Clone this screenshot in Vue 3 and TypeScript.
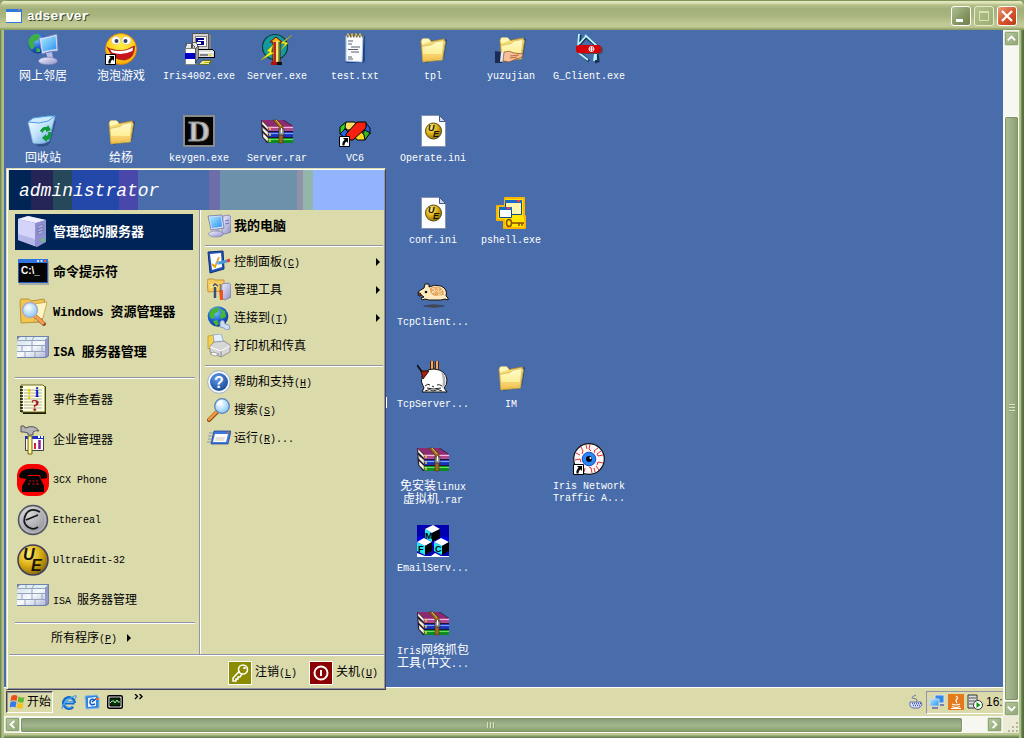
<script setup lang="ts">
import { h, type FunctionalComponent } from 'vue'

interface DesktopItem {
  icon: string
  label: string
  col: number
  row: number
  shortcut?: boolean
}

interface MenuItem {
  icon: string
  label: string
  active?: boolean
  arrow?: boolean
}

// Han runs are set larger than Latin ones, and "&X" marks an underlined access key.
const Txt: FunctionalComponent<{ s: string }> = (props) =>
  h(
    'span',
    { class: 'txt' },
    props.s
      .split(/(&\w|[\u4e00-\u9fff]+)/)
      .filter((part) => part !== '')
      .map((part) => {
        if (part.startsWith('&')) return h('u', part.slice(1))
        if (/[\u4e00-\u9fff]/.test(part)) return h('span', { class: 'han' }, part)
        return part
      }),
  )
Txt.props = ['s']

const desktop: DesktopItem[] = [
  { icon: 'network', label: '网上邻居', col: 1, row: 1 },
  { icon: 'smiley', label: '泡泡游戏', col: 2, row: 1, shortcut: true },
  { icon: 'setup', label: 'Iris4002.exe', col: 3, row: 1 },
  { icon: 'bolts', label: 'Server.exe', col: 4, row: 1 },
  { icon: 'notepad', label: 'test.txt', col: 5, row: 1 },
  { icon: 'folder', label: 'tpl', col: 6, row: 1 },
  { icon: 'shared', label: 'yuzujian', col: 7, row: 1 },
  { icon: 'knife', label: 'G_Client.exe', col: 8, row: 1 },
  { icon: 'recycle', label: '回收站', col: 1, row: 2 },
  { icon: 'folder', label: '给杨', col: 2, row: 2 },
  { icon: 'letterd', label: 'keygen.exe', col: 3, row: 2 },
  { icon: 'rar', label: 'Server.rar', col: 4, row: 2 },
  { icon: 'vc', label: 'VC6', col: 5, row: 2, shortcut: true },
  { icon: 'uedoc', label: 'Operate.ini', col: 6, row: 2 },
  { icon: 'uedoc', label: 'conf.ini', col: 6, row: 3 },
  { icon: 'pshell', label: 'pshell.exe', col: 7, row: 3 },
  { icon: 'hamster', label: 'TcpClient...', col: 6, row: 4 },
  { icon: 'rabbit', label: 'TcpServer...', col: 6, row: 5 },
  { icon: 'folder', label: 'IM', col: 7, row: 5 },
  { icon: 'rar', label: '免安装linux\n虚拟机.rar', col: 6, row: 6 },
  { icon: 'eye', label: 'Iris Network\nTraffic A...', col: 8, row: 6, shortcut: true },
  { icon: 'mfc', label: 'EmailServ...', col: 6, row: 7 },
  { icon: 'rar', label: 'Iris网络抓包\n工具(中文...', col: 6, row: 8 },
]

const pinned: MenuItem[] = [
  { icon: 'tower', label: '管理您的服务器', active: true },
  { icon: 'cmd', label: '命令提示符' },
  { icon: 'explorer', label: 'Windows 资源管理器' },
  { icon: 'wall', label: 'ISA 服务器管理' },
]

const recent: MenuItem[] = [
  { icon: 'events', label: '事件查看器' },
  { icon: 'hammer', label: '企业管理器' },
  { icon: 'phone', label: '3CX Phone' },
  { icon: 'ethereal', label: 'Ethereal' },
  { icon: 'ue', label: 'UltraEdit-32' },
  { icon: 'wall', label: 'ISA 服务器管理' },
]

const places: MenuItem[][] = [
  [{ icon: 'computer', label: '我的电脑', active: true }],
  [
    { icon: 'control', label: '控制面板(&C)', arrow: true },
    { icon: 'tools', label: '管理工具', arrow: true },
    { icon: 'connect', label: '连接到(&T)', arrow: true },
    { icon: 'printer', label: '打印机和传真' },
  ],
  [
    { icon: 'help', label: '帮助和支持(&H)' },
    { icon: 'search', label: '搜索(&S)' },
    { icon: 'run', label: '运行(&R)...' },
  ],
]

const quick = ['ie', 'outlook', 'monitor']
const tray = ['lan', 'java', 'service']
</script>

<template>
  <div class="window">
    <svg class="defs" width="0" height="0" aria-hidden="true">
      <defs>
        <linearGradient id="g-folder" x1="0" y1="0" x2="0" y2="1">
          <stop offset="0" stop-color="#fffbc8" /><stop offset=".6" stop-color="#fdf09a" /><stop offset="1" stop-color="#f2c040" />
        </linearGradient>
        <linearGradient id="g-screen" x1="0" y1="0" x2="1" y2="1">
          <stop offset="0" stop-color="#a8ecff" /><stop offset="1" stop-color="#2d8ff0" />
        </linearGradient>
        <linearGradient id="g-case" x1="0" y1="0" x2="1" y2="1">
          <stop offset="0" stop-color="#f4f4ff" /><stop offset="1" stop-color="#8d8fc8" />
        </linearGradient>
        <radialGradient id="g-globe" cx=".4" cy=".3" r=".8">
          <stop offset="0" stop-color="#79c4ff" /><stop offset=".5" stop-color="#1f63d6" /><stop offset="1" stop-color="#0b2b80" />
        </radialGradient>
        <radialGradient id="g-smile" cx=".5" cy=".35" r=".7">
          <stop offset="0" stop-color="#fff04a" /><stop offset=".7" stop-color="#ffc915" /><stop offset="1" stop-color="#f29a08" />
        </radialGradient>
        <radialGradient id="g-gold" cx=".35" cy=".3" r=".8">
          <stop offset="0" stop-color="#fff07a" /><stop offset=".5" stop-color="#d9ad12" /><stop offset="1" stop-color="#7a5e08" />
        </radialGradient>
        <radialGradient id="g-silver" cx=".35" cy=".3" r=".8">
          <stop offset="0" stop-color="#d8d8d8" /><stop offset="1" stop-color="#8f8f98" />
        </radialGradient>
        <radialGradient id="g-lens" cx=".4" cy=".35" r=".7">
          <stop offset="0" stop-color="#ffffff" /><stop offset="1" stop-color="#7fc6f2" />
        </radialGradient>
        <radialGradient id="g-help" cx=".4" cy=".3" r=".8">
          <stop offset="0" stop-color="#5f9ce8" /><stop offset="1" stop-color="#14418f" />
        </radialGradient>
        <linearGradient id="g-wall" x1="0" y1="0" x2="1" y2="1">
          <stop offset="0" stop-color="#d4e0ee" /><stop offset=".5" stop-color="#f6fbff" /><stop offset="1" stop-color="#b4bcd8" />
        </linearGradient>
        <linearGradient id="g-bin" x1="0" y1="0" x2="1" y2="1">
          <stop offset="0" stop-color="#ffffff" /><stop offset=".5" stop-color="#bfe2fa" /><stop offset="1" stop-color="#5b9ade" />
        </linearGradient>

        <symbol id="i-shortcut" viewBox="0 0 32 32">
          <path d="M.5 21.5h10v10H.5z" fill="#fff" stroke="#000" />
          <path d="M4 23h5v5L7.500 26.500C6 27.500 5.500 28.500 5.500 30.500H3.500C3 28 4 26 5.700 24.700z" fill="#000" />
        </symbol>

        <symbol id="i-network" viewBox="0 0 32 32">
          <circle cx="11" cy="10.500" r="10" fill="url(#g-globe)" />
          <path d="M2 6C5 1 10 0 13 2L11 7 6 9 8 13 5 17C1 13 1 9 2 6zM10 15l3 1v3l-4 0z" fill="#3cb043" />
          <path d="M12 5Q20 4 30 1L31 18Q22 18 15 21z" fill="#d4dcf4" stroke="#6a78b8" stroke-width=".7" />
          <path d="M14 6.500Q21 5.500 28.500 3L29.500 16Q22 16.500 16 18.500z" fill="url(#g-screen)" />
          <path d="M19 20l6-1 1 6-5 1z" fill="#b8bbe2" />
          <ellipse cx="21" cy="28" rx="9.500" ry="3.800" fill="url(#g-case)" stroke="#777aae" stroke-width=".6" />
        </symbol>

        <symbol id="i-smiley" viewBox="0 0 32 32">
          <circle cx="16" cy="16" r="15.500" fill="url(#g-smile)" stroke="#e48200" stroke-width=".8" />
          <ellipse cx="11" cy="7.500" rx="4.500" ry="4" fill="#fff" stroke="#c9b98a" stroke-width=".5" />
          <ellipse cx="21.500" cy="7.500" rx="4.500" ry="4" fill="#fff" stroke="#c9b98a" stroke-width=".5" />
          <circle cx="11.500" cy="8" r="2" fill="#31415a" /><circle cx="20.500" cy="8" r="2" fill="#31415a" />
          <path d="M2 14Q4 16 6 16 18 20 27 14L29.500 13Q30 25 20 27 8 28 2 14z" fill="#c8161d" stroke="#8e1010" stroke-width=".6" />
          <path d="M5 16.500Q17 20.500 28 14.500L27.500 18Q17 23 7 19.500z" fill="#fff" />
        </symbol>

        <symbol id="i-setup" viewBox="0 0 32 32" shape-rendering="crispEdges">
          <path d="M9.500.5h16v16h-16z" fill="#d6d3ce" stroke="#555" /><path d="M26 1l2 2v14h-2z" fill="#848284" />
          <path d="M12 3h11v10H12z" fill="#fff" stroke="#848284" /><path d="M13 5h8v7h-8z" fill="#000084" />
          <path d="M15 7h6v1h-6zM13 9h5v2h-5z" fill="#fff" />
          <path d="M14.500 16.500h15l2 2v6h-17z" fill="#dedede" stroke="#000" /><path d="M15 19h16" stroke="#fff" /><path d="M17 22h8" stroke="#848284" stroke-width="2" /><path d="M26 22h2" stroke="#e8e000" stroke-width="2" />
          <path d="M2 15h10v16H2z" fill="#fff" stroke="#848284" /><path d="M2 20h10v6H2z" fill="#0000c8" />
          <path d="M12 16l3-3v13l-3 4z" fill="#9a9a9a" stroke="#333" stroke-width=".7" /><path d="M2 15l2-5 5 0-1 5M12 15l-3-5 4-1 2 4" fill="#e8e8e8" stroke="#333" stroke-width=".7" />
          <path d="M20 27h9l-3 4H16z" fill="#e8e8a0" stroke="#6a6a20" /><path d="M21 29h5" stroke="#c8b800" />
        </symbol>

        <symbol id="i-bolts" viewBox="0 0 32 32">
          <circle cx="14" cy="14" r="12.500" fill="#149a9e" stroke="#073c3c" stroke-width="1.200" />
          <path d="M9 9l6-5 6 5h-2v20h-7V9z" fill="#e8b818" stroke="#700" />
          <path d="M14 9v20" stroke="#c02020" stroke-width="2" /><path d="M16 8v21" stroke="#fff4a0" stroke-width="1.500" /><path d="M18 9v20" stroke="#284" />
          <path d="M10 29h11v3H10z" fill="#b01010" /><path d="M16 29h5v3h-5z" fill="#111" />
          <path d="M31 2L20 10l4 1-4 6 7-7-4-1zM0 27l9-8-3-1 6-6-2 7 3 1z" fill="#ffff20" stroke="#a8a000" stroke-width=".6" />
        </symbol>

        <symbol id="i-notepad" viewBox="0 0 32 32">
          <path d="M8 3h18v25l-2 2H7z" fill="#193a7a" opacity=".8" />
          <path d="M7 3h17l-1 26-16-1z" fill="#fdfdff" stroke="#a8c4e8" />
          <path d="M8 3h16" stroke="#7a6b20" stroke-width="3" stroke-dasharray="1.500 1.500" />
          <path d="M8 1.500h15" stroke="#e8b840" stroke-width="2" stroke-dasharray="2 2" />
          <path d="M9 8h5M9 11h4M12 14h9M9 16.500h10M12 19h8M9 24h4M9 26h5" stroke="#54606e" stroke-width="1.200" />
        </symbol>

        <symbol id="i-folder" viewBox="0 0 32 32">
          <path d="M6 9l2 21 19-5 3-18-2-1z" fill="#16366e" opacity=".65" />
          <path d="M4 8.500L5 6h7l2 2.500 13-2.500 1.500 3-3 18L6 29z" fill="#f4dc74" stroke="#b8912c" stroke-width=".8" />
          <path d="M4.500 8Q5 5.500 6 5.500h5.500L14 8.500l-9 3z" fill="#fff7b8" />
          <path d="M5 13.500l10-2 3-2.500 9-1.500-2 17.500L6 28.500z" fill="url(#g-folder)" stroke="#d3aa45" stroke-width=".6" />
          <path d="M5.500 21h20L25 24.500 6 28z" fill="#f5bd58" opacity=".5" />
        </symbol>

        <symbol id="i-shared" viewBox="0 0 32 32">
          <use href="#i-folder" x="1" y="-1" width="32" height="32" />
          <path d="M0 18l7 1v11H0z" fill="#1c2b52" /><path d="M6 19l4 1-1 8-4 1z" fill="#e6ecf8" />
          <path d="M9 19q6-2 10 1l9 1q0 4-7 5l-7 3-6-1z" fill="#f2c09a" stroke="#8a4d28" stroke-width=".7" />
          <path d="M15 23l9-1M15 25l7-1" stroke="#c86a38" />
        </symbol>

        <symbol id="i-knife" viewBox="0 0 32 32">
          <path d="M6 14L7 2M7 11l7-8M13 4l12 10M7 20l9 8M24 19l1 9-3 1" fill="none" stroke="#193355" stroke-width="3" />
          <path d="M5 13L6 1M6 11l7-8M12 2l12 11M6 20l9 7M22 20l-1 8M23 18v9" fill="none" stroke="#b8f6ff" stroke-width="1.800" />
          <rect x="5" y="13" width="25" height="8" rx="4" fill="#4a4a52" /><rect x="3" y="12" width="25" height="8" rx="3" fill="#d80008" />
          <circle cx="18.500" cy="16" r="2.500" fill="none" stroke="#fff" /><path d="M18.500 13.500v5M16 16h5" stroke="#fff" />
        </symbol>

        <symbol id="i-recycle" viewBox="0 0 32 32">
          <path d="M6 8l4 23q9 2 13-3l6-22z" fill="#17396f" opacity=".5" />
          <path d="M1 7Q12 7 20 3l8-2-6 25q-6 4-16 2z" fill="url(#g-bin)" stroke="#83b5e4" stroke-width=".7" />
          <path d="M1 7l5-4 15-2 7 0-7 5-9 2z" fill="#cbeafd" stroke="#4d9ae0" />
          <path d="M13 16q3-5 7-4l1-2 3 5-5 2 0-2q-3 0-3 3zM24 17q1 7-4 8v2l-5-4 4-4v2q3-1 2-4z" fill="#0f9c36" />
        </symbol>

        <symbol id="i-letterd" viewBox="0 0 32 32">
          <path d="M1 1h30v30H1z" fill="#050505" stroke="#8b8b8b" stroke-width="2" />
          <text x="16" y="26" text-anchor="middle" font-family="Liberation Serif, serif" font-weight="bold" font-size="30" fill="#c6c6c6" stroke="#8a8a8a" stroke-width="1">D</text>
        </symbol>

        <symbol id="i-rar" viewBox="0 0 32 32">
          <path d="M0 5h23l9 6v17H6L1 22z" fill="#241433" />
          <path d="M0 5h22l9 6H7z" fill="#8d2b70" /><path d="M7 11h25v5H7z" fill="#b04a90" /><path d="M7 12.500h25" stroke="#f0b8e0" stroke-width="1" />
          <path d="M7 17h25v5H7z" fill="#1733b8" /><path d="M7 18.500h25" stroke="#7ca0ff" stroke-width="1.200" />
          <path d="M7 23h25v5H7z" fill="#0b8a20" /><path d="M7 24.500h25" stroke="#62e05a" stroke-width="1.200" />
          <path d="M1 6l6 6v3L1 9zM1 12l6 5v4l-5-5zM2 18l5 5v4l-5-5z" fill="#f5f2e2" stroke="#6b5b46" stroke-width=".5" />
          <path d="M12 5h4l6 6v17h-4V12z" fill="#9b6a20" stroke="#4b300a" stroke-width=".6" /><path d="M15 5l5 6" stroke="#e0b860" />
          <path d="M18 14h5v6h-5z" fill="#999" stroke="#333" stroke-width=".7" /><path d="M20.500 13v5" stroke="#fff" />
          <path d="M9 12v3M9 18v3M9 24v3" stroke="#ecc84c" stroke-width="1.500" />
        </symbol>

        <symbol id="i-vc" viewBox="0 0 32 32">
          <g stroke="#000" stroke-width="1">
            <path d="M1 19v-7l6-5 2 2-4 6z" fill="#38d020" /><path d="M7 7h9l1 4-5 4-4 0-2-3z" fill="#ffe060" />
            <path d="M1 19l5-5 6 6-4 4z" fill="#2468e8" /><path d="M26 7l5 6v6l-5-3-2-5z" fill="#2a60d8" />
            <path d="M31 18l-5 7-4-4 4-6z" fill="#38b828" /><path d="M26 25h-8l-2-3 6-6 3 4z" fill="#ffd820" />
            <path d="M18 7h9l0 6-13 12H7v-6z" fill="#f82010" />
          </g>
        </symbol>

        <symbol id="i-uedoc" viewBox="0 0 32 32">
          <path d="M4.500.5h18l6 6v25h-24z" fill="#fcfdff" stroke="#8793ae" /><path d="M22.500.5v6h6z" fill="#d0d7e6" stroke="#435782" />
          <circle cx="16.500" cy="16" r="8" fill="url(#g-gold)" stroke="#5c4c16" />
          <text x="11" y="16" font-family="Liberation Sans, sans-serif" font-weight="bold" font-style="italic" font-size="9" fill="#111">U</text>
          <text x="16" y="22" font-family="Liberation Sans, sans-serif" font-weight="bold" font-style="italic" font-size="9" fill="#111">E</text>
        </symbol>

        <symbol id="i-pshell" viewBox="0 0 32 32">
          <path d="M10 1h19v18h1v12H9v-8H2V9h8z" fill="#ffe600" stroke="#ffb400" stroke-width="2" stroke-linejoin="round" />
          <path d="M10.500 3.500h16v14h-16z" fill="#fff6b0" stroke="#134a88" /><path d="M10 3h17v3H10z" fill="#1c68c8" />
          <path d="M4.500 10.500h12v10h-12z" fill="#fff" stroke="#134a88" /><path d="M4 10h13v3H4z" fill="#1c68c8" />
          <path d="M22 3h3v2h-3zM12 10h3v2h-3z" fill="#f04030" />
          <g fill="none" stroke="#8a4a00" stroke-width="1.500"><ellipse cx="14" cy="26" rx="2.500" ry="3.500" /><path d="M17 26h12M24 26v3M27 26v3" /></g>
        </symbol>

        <symbol id="i-hamster" viewBox="0 0 32 32">
          <ellipse cx="17" cy="27" rx="11" ry="1.500" fill="#36466e" /><ellipse cx="17" cy="27" rx="6" ry="1.500" fill="#45454d" />
          <path d="M7 9L8 5l4 0 0 3Q17 5 24 7q7 3 5 10l2 2v2l-3-1-4 1H12l-4-1-3 1-1-2 3-1-4-3-2-1 1-2z" fill="#fde9c0" stroke="#111" />
          <path d="M13 9q7-3 13 1l1 6-9 1q-6-2-5-8z" fill="#e5a85e" />
          <path d="M15 10q3-2 3 1l-3 2q2 2 5-2M20 9q3 0 1 3-1 3 3 0l2-2M21 16l4-2" fill="none" stroke="#fbe6be" />
          <circle cx="2.500" cy="15.500" r="1.500" fill="#8b4a10" stroke="#111" /><circle cx="9" cy="13" r="1.300" fill="#111" />
        </symbol>

        <symbol id="i-rabbit" viewBox="0 0 32 32">
          <path d="M13.500 0v9M16.500 0v9M18.500 0v9M21.500 0v9" stroke="#4a2710" stroke-width="1" /><path d="M15 0v9M20 0v9" stroke="#f0a860" stroke-width="2" />
          <path d="M5 15q3-7 12-7 12 1 13 11 0 5-3 8l3 4H5l2-4q-4-6-2-12z" fill="#fff" stroke="#111" />
          <path d="M24 10q6 5 4 14l-3 3q2-8-1-17z" fill="#b0b0b8" />
          <path d="M4 10h8l-6 8z" fill="#a82010" stroke="#341008" /><path d="M0 4l5 7" stroke="#111" stroke-width="1.800" />
          <path d="M8 25q3-3 5-1M20 24q3-1 5 1M15 25l2 1M10 27q6 2 14 0M8 30q5-3 8 0 5-3 9 0" fill="none" stroke="#222" />
        </symbol>

        <symbol id="i-eye" viewBox="0 0 32 32">
          <circle cx="16" cy="16" r="15.300" fill="#fdf8f8" stroke="#111" stroke-width="1.200" />
          <path d="M8 4l2 4-1 3M17 1l-1 5 2 2M25 5l-4 3 1 2M30 12l-5 1-1-2M30 20l-5-1-1 3M26 27l-3-4M19 30l-1-5-2-1M11 29l1-4M3 10l4 2M2 17l5-1 1 3M13 2l1 4M28 8l-4 3M22 29l-1-4" fill="none" stroke="#e03030" />
          <circle cx="16" cy="16" r="6.800" fill="#2a86f4" stroke="#124cc0" /><circle cx="16" cy="16" r="3" fill="#02041c" /><circle cx="17.500" cy="15" r="1" fill="#fff" />
        </symbol>

        <symbol id="i-mfc" viewBox="0 0 32 32">
          <path d="M0 0h32v32H0z" fill="#0000b0" /><path d="M0 12h32v8H0z" fill="#0000e8" /><path d="M0 28l8 3h6l4-3 6 3h8v1H0z" fill="#fff" />
          <path d="M8 4l8-4 7 4-8 4zM0 17l7-4 8 4-7 4zM17 17l7-4 8 4-7 4z" fill="#fff" />
          <path d="M8 4l7 4v9l-7-4zM0 17l8 4v9l-8-4zM17 17l8 4v9l-8-4z" fill="#25e6f0" /><path d="M15 8l8-4v9l-8 4zM8 21l7-4v9l-7 4zM25 21l7-4v9l-7 4z" fill="#000" />
          <g font-family="Liberation Sans, sans-serif" font-weight="bold" font-size="9" fill="#000"><text x="8" y="14">M</text><text x="1" y="27">F</text><text x="18" y="27">C</text></g>
        </symbol>

        <symbol id="i-tower" viewBox="0 0 32 32">
          <path d="M1 3l10-3 18 4v22l-9 5L1 24z" fill="#8e8fd0" />
          <path d="M1 3l10-3 18 4-10 3z" fill="#f0f0ff" /><path d="M1 3l17 4v23L1 23z" fill="#d4d4fa" /><path d="M1 18l17 5v7L1 24z" fill="#b4b5e8" />
          <path d="M19 7l9-3v22l-9 5z" fill="#8e8fcc" /><path d="M21 10l5-2v9l-5 2z" fill="#a8aadc" stroke="#6c6da8" stroke-width=".6" />
          <path d="M21 13l5-2M21 16l5-2" stroke="#6566a0" stroke-width=".8" /><circle cx="26" cy="24" r="1.500" fill="#52e040" />
        </symbol>

        <symbol id="i-cmd" viewBox="0 0 32 32">
          <path d="M2 5h30v24H2z" fill="#7d8aa8" opacity=".6" /><path d="M1.500 4.500h29v22h-29z" fill="#050505" stroke="#2457b8" />
          <path d="M1 3h30v4H1z" fill="#2f74e0" /><path d="M20 5h2M23.500 5h2" stroke="#cfe4ff" stroke-width="2" /><path d="M27 5h2" stroke="#f05030" stroke-width="2" />
          <text x="4" y="18" font-family="Liberation Sans, sans-serif" font-size="10" fill="#fff">C:\_</text>
        </symbol>

        <symbol id="i-explorer" viewBox="0 0 32 32">
          <path d="M3 5l1-2h8l2 2 13-2 1 5-3 18L4 27z" fill="#f0c64e" stroke="#a97820" stroke-width=".7" />
          <path d="M18 8l12-2-4 16-8 4z" fill="#fdf6c4" stroke="#c09438" stroke-width=".7" />
          <path d="M18 20l9 8" stroke="#8a4a20" stroke-width="4" stroke-linecap="round" /><path d="M18 20l8 7" stroke="#f5a050" stroke-width="3" stroke-linecap="round" />
          <circle cx="13" cy="14" r="7.500" fill="url(#g-lens)" stroke="#b0a8c8" stroke-width="1.500" />
        </symbol>

        <symbol id="i-wall" viewBox="0 0 32 32">
          <path d="M0 0h32v20l-3 2H0z" fill="#7380aa" /><path d="M0 4h28v17H0z" fill="url(#g-wall)" />
          <path d="M0 4l3-3h28l-3 3z" fill="#dff0f0" /><path d="M28 4l3-3v18l-3 2z" fill="#8f9bc6" />
          <path d="M0 4.500h28M0 9.500h28M0 15.500h28M9 1v3M17 1l-2 3v5M5 10v5M15 10v5M25 10v5M8 16v5M18 16v5" fill="none" stroke="#98a4bc" />
        </symbol>

        <symbol id="i-events" viewBox="0 0 32 32">
          <path d="M5 2h23l1 1v27H6z" fill="#1b1b00" /><path d="M4 1h22l2 2v25H4z" fill="#ffffd8" stroke="#6b6b20" />
          <path d="M7 6h18M7 9h18M7 12h18M7 15h18M7 18h18M7 21h18M7 24h18" stroke="#9a9a9a" stroke-width=".8" />
          <path d="M3 3h3M3 6h3M3 9h3M3 12h3M3 15h3M3 18h3M3 21h3M3 24h3M3 27h3" stroke="#111" stroke-width="1.500" />
          <g font-family="Liberation Serif, serif" font-weight="bold"><text x="10" y="15" font-size="15" fill="#e8d000">!</text><text x="18" y="13" font-size="14" fill="#0018d0">i</text><text x="14" y="27" font-size="17" fill="#a01818">?</text></g>
        </symbol>

        <symbol id="i-hammer" viewBox="0 0 32 32">
          <path d="M8.500 12.500h18v14h-18z" fill="#fff" stroke="#404048" /><path d="M8 12h19v3H8z" fill="#1a2cc8" /><path d="M21 13h2M24 13h2" stroke="#fff" stroke-width="2" />
          <path d="M18 25v-6" stroke="#e02020" stroke-width="2" /><path d="M22.500 25v-9" stroke="#902090" stroke-width="2.500" />
          <path d="M4 2h3l1 2q10-4 14 3-4-1-6 1v3h-5V9L7 8H4z" fill="#b4b4b4" stroke="#55555a" />
          <path d="M11 12h4v18h-4z" fill="#f4e66c" stroke="#7c6c10" /><path d="M13 13v16" stroke="#fff" />
        </symbol>

        <symbol id="i-phone" viewBox="0 0 32 32">
          <rect x="0" y="0" width="32" height="32" rx="12" fill="#f80000" />
          <path d="M2 12q1-6 9-7 10-1 16 2 4 2 3 7l-6 1-1-4H11l-1 4-7-1z" fill="#050505" />
          <path d="M11 12h11l5 10v6H5v-6z" fill="#050505" /><path d="M12 17h2M15.500 17h2M19 17h2M11 20h2M15.500 20h2M19 20h3" stroke="#d81010" stroke-width="1.200" />
        </symbol>

        <symbol id="i-ethereal" viewBox="0 0 32 32">
          <circle cx="16" cy="16" r="14.500" fill="url(#g-silver)" stroke="#4e5262" stroke-width="1.500" />
          <circle cx="16" cy="16" r="12.500" fill="none" stroke="#dedede" opacity=".5" /><path d="M23 8Q14 3 9 10 4 20 13 24q4 2 8-1M9 16l12-5" fill="none" stroke="#17171b" stroke-width="1.800" />
        </symbol>

        <symbol id="i-ue" viewBox="0 0 32 32">
          <circle cx="16" cy="16" r="15" fill="url(#g-gold)" stroke="#3f3a5f" stroke-width="1.500" />
          <g font-family="Liberation Sans, sans-serif" font-weight="bold" font-style="italic" font-size="16" fill="#181308"><text x="6" y="16">U</text><text x="14" y="27">E</text></g>
        </symbol>

        <symbol id="i-computer" viewBox="0 0 24 24">
          <path d="M16 2l6-1 2 2v15l-6 2-3-1z" fill="url(#g-case)" stroke="#5d60a6" stroke-width=".6" /><path d="M18 7l4-1M18 10l4-1" stroke="#6e72b4" />
          <path d="M1 2l14-1 2 13-13 2z" fill="#d6dcf4" stroke="#5a6aae" stroke-width=".7" /><path d="M2.500 3.500L14 2.500 15 12.500 5 14z" fill="url(#g-screen)" />
          <path d="M8 15l4-1 1 4H8z" fill="#a4a8d4" /><ellipse cx="9" cy="20" rx="7.500" ry="3" fill="url(#g-case)" stroke="#7478ac" stroke-width=".6" />
        </symbol>

        <symbol id="i-control" viewBox="0 0 24 24">
          <path d="M1 2l15-1 1 18-14 4z" fill="#1d55b8" stroke="#0e2d76" /><path d="M3 4l11-1 1 14-10 3z" fill="#fff" />
          <path d="M5 14l3 3 4-10" fill="none" stroke="#e8a010" stroke-width="1.800" /><path d="M12 13l8-2" stroke="#4b9ae0" stroke-width="3" /><path d="M20 11l3-1" stroke="#e83c20" stroke-width="3" /><path d="M8 13l4-2v4z" fill="#79b0ea" />
        </symbol>

        <symbol id="i-tools" viewBox="0 0 24 24">
          <path d="M0 3l1-2h5l2 1h9v11L1 14z" fill="#f5cc60" stroke="#b27d20" stroke-width=".7" /><path d="M3 7h8M3 9h7" stroke="#fff4b0" />
          <path d="M15 6l7-1 2 2v12l-6 3-4-2z" fill="url(#g-case)" stroke="#6063a8" stroke-width=".6" />
          <path d="M8 9v11" stroke="#3a506e" stroke-width="2.500" /><path d="M6 8l2-2 3 2" fill="none" stroke="#3a506e" stroke-width="1.500" /><path d="M12 12h4v10h-3z" fill="#e85818" /><path d="M13.500 6v7" stroke="#777" stroke-width="1.500" />
        </symbol>

        <symbol id="i-connect" viewBox="0 0 24 24">
          <circle cx="11" cy="10.500" r="10.300" fill="url(#g-globe)" /><path d="M3 6q5-6 9-4l-1 4-4 2 1 3-3 2q-4-2-2-7zM13 3l5 2 1 6-5 2-1-4 2-2zM6 15l4-1 2 4-3 2z" fill="#45b82c" />
          <path d="M13 16q2-3 4-1l1 3 4 1 1 4-4 1-2-2-4-1z" fill="#cddcf4" stroke="#7891b8" stroke-width=".8" />
        </symbol>

        <symbol id="i-printer" viewBox="0 0 24 24">
          <path d="M1 2l6-1v12l-6 2z" fill="#f5cf50" stroke="#b58b20" stroke-width=".6" /><path d="M6 1l8-1 3 9-9 3z" fill="#e4f0ff" stroke="#7b9cc8" stroke-width=".7" />
          <path d="M3 12l4-4 10-1 6 4v7l-9 5-11-5z" fill="#d6d6d6" stroke="#777" stroke-width=".7" /><path d="M3 13l11 4 9-5" fill="none" stroke="#fff" /><path d="M14 17v6" stroke="#8a8a90" /><path d="M6 18l6 2-4 2-5-2z" fill="#fff" stroke="#777" stroke-width=".6" />
        </symbol>

        <symbol id="i-help" viewBox="0 0 24 24">
          <circle cx="12" cy="12" r="11.300" fill="#f6f9ff" stroke="#8ca0c4" stroke-width=".8" /><circle cx="12" cy="12" r="9" fill="url(#g-help)" />
          <text x="12" y="18" text-anchor="middle" font-family="Liberation Sans, sans-serif" font-weight="bold" font-size="16" fill="#fff">?</text>
        </symbol>

        <symbol id="i-search" viewBox="0 0 24 24">
          <path d="M2 22l8-8" stroke="#8a4a10" stroke-width="4" stroke-linecap="round" /><path d="M2 21.500l8-8" stroke="#f09a40" stroke-width="2.500" stroke-linecap="round" />
          <circle cx="15" cy="8" r="7.300" fill="url(#g-lens)" stroke="#5a7fc0" stroke-width="1.300" /><path d="M11 7q1-4 5-4" fill="none" stroke="#fff" stroke-width="1.500" />
        </symbol>

        <symbol id="i-run" viewBox="0 0 24 24">
          <path d="M2 7h5M1 10h5M1 13h4M0 16h4" stroke="#8a98b4" /><path d="M7 5h17l-3 13H4z" fill="#3d78dc" stroke="#203c88" stroke-width=".7" /><path d="M8 8h13l-2 8H6z" fill="#fff" /><path d="M9 11h9l-1 4H8z" fill="#e3e3d8" /><path d="M20 6.500h2" stroke="#f05030" stroke-width="1.500" />
        </symbol>

        <symbol id="i-key" viewBox="0 0 24 24">
          <path d="M.5.5h23v23H.5z" fill="#8b8c00" stroke="#fff" /><circle cx="15" cy="8.500" r="4.500" fill="none" stroke="#fff" stroke-width="1.600" /><circle cx="16.500" cy="7" r="1.300" fill="#fff" /><path d="M11.500 10L5 17v3h3v-2h2v-2h2l2-3" fill="none" stroke="#fff" stroke-width="1.500" />
        </symbol>
        <symbol id="i-power" viewBox="0 0 24 24">
          <path d="M.5.5h23v23H.5z" fill="#8b0000" stroke="#fff" /><circle cx="12" cy="12" r="6.500" fill="none" stroke="#fff" stroke-width="2" /><path d="M12 9v6" stroke="#fff" stroke-width="2" />
        </symbol>

        <symbol id="i-flag" viewBox="0 0 16 16">
          <path d="M2 2q3-2 6 0L7 7Q4 5.500 1 7z" fill="#e8501c" /><path d="M9 2.500q3 2 6 .5L14 8q-3 1.500-6-.5z" fill="#6ab82c" /><path d="M1 8q3-1.500 6 0l-1 5.500q-3-1.500-6 0z" fill="#3878e8" /><path d="M8 8.500q3 2 6 .5l-1 5q-3 1.500-6-.5z" fill="#f8c020" />
        </symbol>
        <symbol id="i-ie" viewBox="0 0 16 16">
          <path d="M13.500 9H4M13.500 9A5.500 5.500 0 1 0 12 12.700" fill="none" stroke="#1468c8" stroke-width="3" /><path d="M12.500 8.500H4M12.500 8A4.600 4.600 0 1 0 12 11.500" fill="none" stroke="#58b8f8" stroke-width="1" />
          <path d="M1.500 15Q0 13 4 8.500T14.500 1.500Q16 2 14 5" fill="none" stroke="#4aa4ec" stroke-width="1.200" />
        </symbol>
        <symbol id="i-outlook" viewBox="0 0 16 16">
          <path d="M1 2l12-1 2 3v10L2 15z" fill="#2f86e0" stroke="#8ab8e8" /><path d="M4 4l8-1v9l-8 1z" fill="#eaf6ff" /><path d="M11 6q-5-2-5 2t5 2M8 8l5-4" fill="none" stroke="#1458b8" stroke-width="1.500" /><path d="M12 5l3 0" stroke="#f07030" stroke-width="2" />
        </symbol>
        <symbol id="i-monitor" viewBox="0 0 16 16">
          <rect x=".7" y="1.700" width="14.600" height="12.600" rx="1.500" fill="#dcdcdc" stroke="#000" stroke-width="1.400" /><path d="M3 4h10v8H3z" fill="#053005" stroke="#000" /><path d="M3 9l2-2h2l1 2 2-3 1 2h2" fill="none" stroke="#a8f0a8" />
        </symbol>
        <symbol id="i-keyboard" viewBox="0 0 16 16">
          <path d="M2 8h11l1 3-3 3H5q-4-1-3-6z" fill="#dfe6fa" stroke="#626fa8" /><path d="M4 9.500h9M5 11.500h8" stroke="#4258b4" stroke-dasharray="1 1" stroke-width="1.300" /><path d="M8 8Q11 5 6 4.500T8 1" fill="none" stroke="#6d769c" />
        </symbol>
        <symbol id="i-lan" viewBox="0 0 16 16">
          <path d="M6 1h9v8H6z" fill="#2f8ae8" stroke="#d8e0f0" /><path d="M1 5h9v7H1z" fill="url(#g-screen)" stroke="#c9d3ea" /><path d="M11 11h4M3 14h6" stroke="#7b84a8" stroke-width="2" />
        </symbol>
        <symbol id="i-java" viewBox="0 0 16 16">
          <path d="M0 0h16v16H0z" fill="#e47a1c" /><path d="M8 2q3 2 0 4 0 2 1 3M4 10q4 2 8 0M4 12.500q4 2 8 0M3 14.500h10" fill="none" stroke="#fff" stroke-width="1.200" />
        </symbol>
        <symbol id="i-service" viewBox="0 0 16 16">
          <path d="M1 1h9v13H1z" fill="#dcdcdc" stroke="#333" /><path d="M2 4h7M2 7h7M2 10h4" stroke="#555" /><circle cx="11" cy="11" r="4.500" fill="#fff" stroke="#333" /><path d="M9.500 8v6l4-3z" fill="#0a9a18" />
        </symbol>
      </defs>
    </svg>

    <header class="titlebar">
      <svg class="app-icon" viewBox="0 0 16 14" aria-hidden="true">
        <path d="M0 0h16v14H0z" fill="#2f78dc" /><path d="M0 3h15v10H0z" fill="#fffffa" /><path d="M12 1h2" stroke="#f08060" />
      </svg>
      <h1>adserver</h1>
      <div class="caption-buttons">
        <button class="cap" aria-label="Minimize"><svg viewBox="0 0 16 16"><path d="M3 12.500h7" stroke="#fff" stroke-width="3" /></svg></button>
        <button class="cap dim" aria-label="Restore"><svg viewBox="0 0 16 16"><path d="M3.500 3.500h9v9h-9z" fill="none" stroke="#d9e4b4" /><path d="M3 4h10" stroke="#d9e4b4" stroke-width="2" /></svg></button>
        <button class="cap close" aria-label="Close"><svg viewBox="0 0 16 16"><path d="M3 3l10 10M13 3L3 13" stroke="#fff" stroke-width="2.300" /></svg></button>
      </div>
    </header>

    <div class="client">
      <div class="remote">
        <main class="desktop">
          <button v-for="(d, i) in desktop" :key="i" class="shortcut" :class="['c' + d.col, 'r' + d.row]">
            <svg class="big" viewBox="0 0 32 32" aria-hidden="true">
              <use :href="'#i-' + d.icon" width="32" height="32" />
              <use v-if="d.shortcut" href="#i-shortcut" width="32" height="32" />
            </svg>
            <Txt :s="d.label" />
          </button>
          <span class="caret"></span>
        </main>

        <footer class="taskbar">
          <button class="start">
            <svg viewBox="0 0 16 16" aria-hidden="true"><use href="#i-flag" width="16" height="16" /></svg>
            <Txt s="开始" />
          </button>
          <div class="quick">
            <button v-for="q in quick" :key="q" :aria-label="q"><svg viewBox="0 0 16 16"><use :href="'#i-' + q" width="16" height="16" /></svg></button>
            <button class="more" aria-label="More"><svg viewBox="0 0 10 6"><path d="M1 0l2.500 2.500L1 5M5.500 0L8 2.500 5.500 5" fill="none" stroke="#000" stroke-width="1.400" /></svg></button>
          </div>
          <svg class="ime" viewBox="0 0 16 16" aria-hidden="true"><use href="#i-keyboard" width="16" height="16" /></svg>
          <div class="tray">
            <svg v-for="t in tray" :key="t" viewBox="0 0 16 16" aria-hidden="true"><use :href="'#i-' + t" width="16" height="16" /></svg>
            <time>16:</time>
          </div>
        </footer>

        <nav class="menu">
          <div class="banner">administrator</div>
          <div class="columns">
            <div class="left">
              <div class="stack bold">
                <button v-for="m in pinned" :key="m.label" class="item" :class="{ active: m.active }">
                  <svg class="big" viewBox="0 0 32 32" aria-hidden="true"><use :href="'#i-' + m.icon" width="32" height="32" /></svg>
                  <Txt :s="m.label" />
                </button>
              </div>
              <hr />
              <div class="stack">
                <button v-for="m in recent" :key="m.label" class="item">
                  <svg class="big" viewBox="0 0 32 32" aria-hidden="true"><use :href="'#i-' + m.icon" width="32" height="32" /></svg>
                  <Txt :s="m.label" />
                </button>
              </div>
              <hr class="last" />
              <button class="all">
                <Txt s="所有程序(&P)" />
                <svg class="arrow" viewBox="0 0 4 8" aria-hidden="true"><path d="M0 0l4 4-4 4z" /></svg>
              </button>
            </div>
            <div class="right">
              <div v-for="(group, g) in places" :key="g" class="group">
                <button v-for="m in group" :key="m.label" class="place" :class="{ strong: m.active }">
                  <svg class="mid" viewBox="0 0 24 24" aria-hidden="true"><use :href="'#i-' + m.icon" width="24" height="24" /></svg>
                  <Txt :s="m.label" />
                  <svg v-if="m.arrow" class="arrow" viewBox="0 0 4 8" aria-hidden="true"><path d="M0 0l4 4-4 4z" /></svg>
                </button>
              </div>
            </div>
          </div>
          <div class="session">
            <button><svg class="mid" viewBox="0 0 24 24" aria-hidden="true"><use href="#i-key" width="24" height="24" /></svg><Txt s="注销(&L)" /></button>
            <button><svg class="mid" viewBox="0 0 24 24" aria-hidden="true"><use href="#i-power" width="24" height="24" /></svg><Txt s="关机(&U)" /></button>
          </div>
        </nav>
      </div>

      <div class="bar vertical">
        <button class="step" aria-label="Up"><svg viewBox="0 0 12 12"><path d="M2 8l4-4 4 4" /></svg></button>
        <div class="gap"></div>
        <div class="thumb"><i></i></div>
        <button class="step" aria-label="Down"><svg viewBox="0 0 12 12"><path d="M2 4l4 4 4-4" /></svg></button>
      </div>
      <div class="bar horizontal">
        <button class="step" aria-label="Left"><svg viewBox="0 0 12 12"><path d="M8 2L4 6l4 4" /></svg></button>
        <div class="thumb"><i></i></div>
        <div class="gap"></div>
        <button class="step" aria-label="Right"><svg viewBox="0 0 12 12"><path d="M4 2l4 4-4 4" /></svg></button>
      </div>
      <div class="corner">
        <svg viewBox="0 0 12 12" aria-hidden="true"><path d="M9 1h2v2H9zM5 5h2v2H5zM9 5h2v2H9zM1 9h2v2H1zM5 9h2v2H5zM9 9h2v2H9z" fill="#b5b598" /></svg>
      </div>
    </div>
  </div>
</template>

<style>
body {
  margin: 0;
  background: #8aa16b;
}
.txt {
  white-space: pre;
}
.txt .han {
  font-size: 12px;
}
.bold .txt .han,
.strong .txt .han {
  font-size: 13px;
}
</style>

<style scoped>
* {
  box-sizing: border-box;
}
.window {
  display: flex;
  flex-direction: column;
  min-height: 100vh;
  font-family: "Liberation Mono", "Noto Sans CJK SC", monospace;
  font-size: 10px;
  line-height: 12px;
  color: #000;
  background: #bfc78f;
  border-radius: 7px 7px 0 0;
  overflow: hidden;
}
.defs {
  position: absolute;
}
button {
  margin: 0;
  padding: 0;
  border: 0;
  background: none;
  color: inherit;
  font: inherit;
}
svg {
  display: block;
  flex: none;
}
.big {
  width: 32px;
  height: 32px;
}
.mid {
  width: 24px;
  height: 24px;
}

.titlebar {
  display: flex;
  align-items: center;
  height: 30px;
  padding: 2px 7px 0 6px;
  background: linear-gradient(#7f965a 0, #7f965a 1px, #e5e9c2 1px, #dbe0b4 3px, #b5c087 5px, #a4b07b 9px, #a9b57f 16px, #c1c995 24px, #c0c895 27px, #96a46b 29px, #8a9b5f 30px);
}
.app-icon {
  width: 16px;
  height: 14px;
}
h1 {
  flex: 1;
  margin: 0;
  padding: 2px 0 0 5px;
  font-size: 13px;
  line-height: 16px;
  color: #fff;
  text-shadow: 1px 1px 0 #3e4a24;
}
.caption-buttons {
  display: flex;
  gap: 3px;
}
.cap {
  width: 20px;
  height: 20px;
  padding: 1px;
  border: 1px solid #fff;
  border-radius: 3px;
  background: linear-gradient(135deg, #b1bf93, #84955f 60%, #6f8050);
}
.cap.dim {
  border-color: #e6ecc9;
  background: linear-gradient(135deg, #b3c18e, #9cad74);
}
.cap.close {
  background: linear-gradient(135deg, #e89a78, #d5522c 55%, #b83a18);
}

.client {
  flex: 1;
  display: grid;
  grid-template-columns: minmax(0, 1fr) 16px;
  grid-template-rows: 1fr 17px;
  padding: 0 5px 5px 4px;
  background:
    linear-gradient(90deg, #6d8a52 0, #6d8a52 1px, #8aa16b 1px, #bcc68d 3px, #a5b47a 4px, transparent 4px),
    linear-gradient(270deg, #4f6b3c 0, #5d7a49 2px, #8aa16b 3px, #ced69e 4px, #a5b47a 5px, transparent 5px),
    linear-gradient(0deg, #5d7a49 0, #8aa16b 2px, #ced69e 4px, #a5b47a 5px, transparent 5px);
}
.remote {
  position: relative;
  display: flex;
  flex-direction: column;
  overflow: hidden;
}
.desktop {
  flex: 1;
  display: grid;
  grid-template-columns: repeat(8, 78px);
  grid-template-rows: repeat(7, 82px) auto;
  padding-top: 3px;
  background: #496daa;
  color: #fff;
}
.shortcut {
  display: flex;
  flex-direction: column;
  align-items: center;
  align-self: start;
  gap: 6px;
}
.c1 { grid-column: 1; }
.c2 { grid-column: 2; }
.c3 { grid-column: 3; }
.c4 { grid-column: 4; }
.c5 { grid-column: 5; }
.c6 { grid-column: 6; }
.c7 { grid-column: 7; }
.c8 { grid-column: 8; }
.r1 { grid-row: 1; }
.r2 { grid-row: 2; }
.r3 { grid-row: 3; }
.r4 { grid-row: 4; }
.r5 { grid-row: 5; }
.r6 { grid-row: 6; }
.r7 { grid-row: 7; }
.r8 { grid-row: 8; }
.caret {
  position: absolute;
  left: 382px;
  top: 367px;
  width: 1px;
  height: 11px;
  background: #fff;
}

.taskbar {
  display: flex;
  align-items: center;
  height: 29px;
  padding-left: 2px;
  border-top: 1px solid #fff;
  background: #dbdaab;
}
.start {
  display: flex;
  align-items: center;
  gap: 1px;
  width: 47px;
  height: 22px;
  padding: 2px;
  border: 1px solid;
  border-color: #44434a #fff #fff #44434a;
  box-shadow: inset 1px 1px 0 #9293a8;
}
.start svg {
  width: 17px;
  height: 16px;
}
.start > .txt {
  padding-top: 2px;
}
.quick {
  display: flex;
  align-items: center;
  gap: 7px;
  flex: 1;
  padding-left: 8px;
}
.quick svg {
  width: 16px;
  height: 16px;
}
.quick .more {
  align-self: flex-start;
  padding-left: 4px;
}
.quick .more svg {
  width: 10px;
  height: 6px;
}
.ime {
  width: 16px;
  height: 16px;
  margin-right: 2px;
}
.tray {
  display: flex;
  align-items: center;
  gap: 3px;
  width: 77px;
  height: 23px;
  padding-left: 2px;
  border: solid;
  border-width: 1px 0 1px 1px;
  border-color: #9293a8 #dbdaab #fff #9293a8;
}
.tray svg {
  width: 16px;
  height: 16px;
}
.tray time {
  font-family: "Liberation Sans", sans-serif;
  font-size: 12px;
  white-space: nowrap;
}

.menu {
  position: absolute;
  left: 2px;
  bottom: 26px;
  width: 380px;
  padding: 1px 1px 1px 2px;
  background: #dbdaab;
  border: 1px solid;
  border-color: #dbdaab #44434a #44434a #dbdaab;
  box-shadow: inset 1px 1px 0 #fff, inset -1px -1px 0 #9293a8;
}
.menu button > .txt {
  padding-top: 2px;
}
.banner {
  height: 40px;
  padding: 1px 0 0 10px;
  font-size: 18px;
  font-style: italic;
  line-height: 40px;
  color: #fff;
  background: linear-gradient(
    90deg,
    #002456 22px, #252456 22px 44px, #25485a 44px 63px, #2448aa 63px 110px, #4948aa 110px 129px, #496daa 129px 200px,
    #6d6daa 200px 211px, #6d91aa 211px 288px, #9291aa 288px 294px, #92b6aa 294px 304px, #92b4ff 304px
  );
}
.columns {
  display: flex;
  height: 444px;
}
.left {
  width: 190px;
  padding: 4px 4px 0 6px;
}
.right {
  flex: 1;
  padding: 2px 1px 0 5px;
  border-left: 1px solid #9293a8;
  box-shadow: inset 1px 0 0 #fff;
}
hr {
  height: 2px;
  margin: 7px 0 3px;
  border: 0;
  background: linear-gradient(#9293a8 1px, #fff 1px);
}
hr.last {
  margin: 4px 0 0;
}
.stack {
  display: flex;
  flex-direction: column;
  gap: 4px;
}
.bold,
.strong {
  font-size: 12px;
  font-weight: bold;
}
.item {
  display: flex;
  align-items: center;
  gap: 4px;
  height: 36px;
  margin-right: 2px;
  padding-left: 2px;
  text-align: left;
}
.item.active {
  background: #002456;
  color: #fff;
}
.all {
  display: flex;
  align-items: center;
  gap: 10px;
  height: 28px;
  padding-left: 36px;
}
.arrow {
  width: 4px;
  height: 8px;
}
.group + .group {
  margin-top: 5px;
  padding-top: 3px;
  background: linear-gradient(#9293a8 1px, #fff 1px 2px, transparent 2px);
}
.place {
  display: flex;
  align-items: center;
  gap: 3px;
  width: 100%;
  height: 28px;
  padding: 0 3px 0 2px;
}
.place .arrow {
  margin-left: auto;
}
.session {
  display: flex;
  align-items: center;
  justify-content: flex-end;
  gap: 12px;
  height: 34px;
  padding: 3px 6px 0 0;
  background: linear-gradient(#9293a8 1px, #fff 1px 2px, transparent 2px);
}
.session button {
  display: flex;
  align-items: center;
  gap: 3px;
}

.bar {
  display: flex;
  background: #f7f7f1;
}
.vertical {
  flex-direction: column;
  padding: 1px 0 0 1px;
}
.horizontal {
  padding: 1px 1px 0;
}
.step {
  flex: none;
  width: 15px;
  height: 15px;
  padding: 1px;
  border: 1px solid #dce4cc;
  border-radius: 2px;
  outline: 1px solid #8fa678;
  outline-offset: -2px;
  background: linear-gradient(135deg, #b9c8a0, #8ea574);
}
.step path {
  fill: none;
  stroke: #fff;
  stroke-width: 2;
}
.thumb {
  display: flex;
  align-items: center;
  justify-content: center;
  margin: 1px;
  border-radius: 1px;
  outline: 1px solid #fff;
}
.vertical .gap {
  flex: 70;
}
.vertical .thumb {
  flex: 581;
  width: 13px;
  border: 1px solid #7f9467;
  background: linear-gradient(90deg, #a9bb8f, #9bac85 60%, #87a070);
}
.vertical .thumb i {
  width: 6px;
  height: 9px;
  background: repeating-linear-gradient(#d8e2c2 0 1px, #8ea374 1px 2px, #a0b28a 2px 3px);
}
.horizontal .gap {
  flex: 24;
}
.horizontal .thumb {
  flex: 940;
  height: 14px;
  border: 1px solid #7f9467;
  background: linear-gradient(#899f78, #a3b58e 55%, #84a068);
}
.horizontal .thumb i {
  width: 9px;
  height: 6px;
  background: repeating-linear-gradient(90deg, #d8e2c2 0 1px, #8ea374 1px 2px, #a0b28a 2px 3px);
}
.corner {
  display: flex;
  align-items: flex-end;
  justify-content: flex-end;
  background: #ecebd8;
}
.corner svg {
  width: 12px;
  height: 12px;
}
</style>
